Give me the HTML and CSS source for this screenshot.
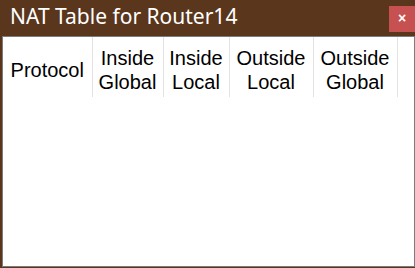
FILE: index.html
```html
<!DOCTYPE html>
<html lang="en">
<head>
	<meta charset="UTF-8">
	<title>NAT Table for Router14</title>
	<link rel="stylesheet" href="styles.css">
</head>
<body>
	<div class="window">
		<div class="titlebar">
			<span class="title">NAT Table for Router14</span>
			<span class="close">&times;</span>
		</div>
		<div class="content">
			<table class="nat">
				<colgroup>
					<col class="c-proto">
					<col class="c-in">
					<col class="c-inl">
					<col class="c-out">
					<col class="c-out">
					<col>
				</colgroup>
				<tr>
					<th>Protocol</th>
					<th>Inside<br>Global</th>
					<th>Inside<br>Local</th>
					<th>Outside<br>Local</th>
					<th>Outside<br>Global</th>
					<th class="rest"></th>
				</tr>
			</table>
		</div>
	</div>
</body>
</html>
```

FILE: styles.css
```css
*{padding: 0;margin: 0;}
body{
	background-color: #fff;
}
.window{
	width: 415px;
	height: 268px;
	background-color: #5a361c;
	display: flex;
	flex-direction: column;
}
.titlebar{
	height: 36px;
	display: flex;
	align-items: flex-start;
	justify-content: space-between;
}
.title{
	color: #fff;
	font-family: "Noto Sans", sans-serif;
	font-size: 21px;
	line-height: 32px;
	padding-left: 10px;
}
.close{
	margin-top: 6px;
	width: 26px;
	height: 26px;
	background-color: #c75050;
	color: #fff;
	font-family: "Liberation Sans", sans-serif;
	font-size: 14px;
	font-weight: bold;
	line-height: 25px;
	text-align: center;
}
.content{
	flex: 1;
	margin: 0 0 1px 2px;
	background-color: #fff;
	border: 1px solid #7c7c7c;
}
.nat{
	border-collapse: collapse;
	table-layout: fixed;
	width: 100%;
}
.nat .c-proto{ width: 89px; }
.nat .c-in{ width: 71px; }
.nat .c-inl{ width: 66px; }
.nat .c-out{ width: 84px; }
.nat th{
	height: 54px;
	padding: 6px 0 0;
	border-right: 1px solid #e3e3e3;
	font-family: "Liberation Sans", Arial, sans-serif;
	font-size: 20px;
	font-weight: normal;
	line-height: 24px;
	color: #000;
	text-align: center;
	white-space: nowrap;
}
.nat th.rest{
	border-right: none;
}
```
